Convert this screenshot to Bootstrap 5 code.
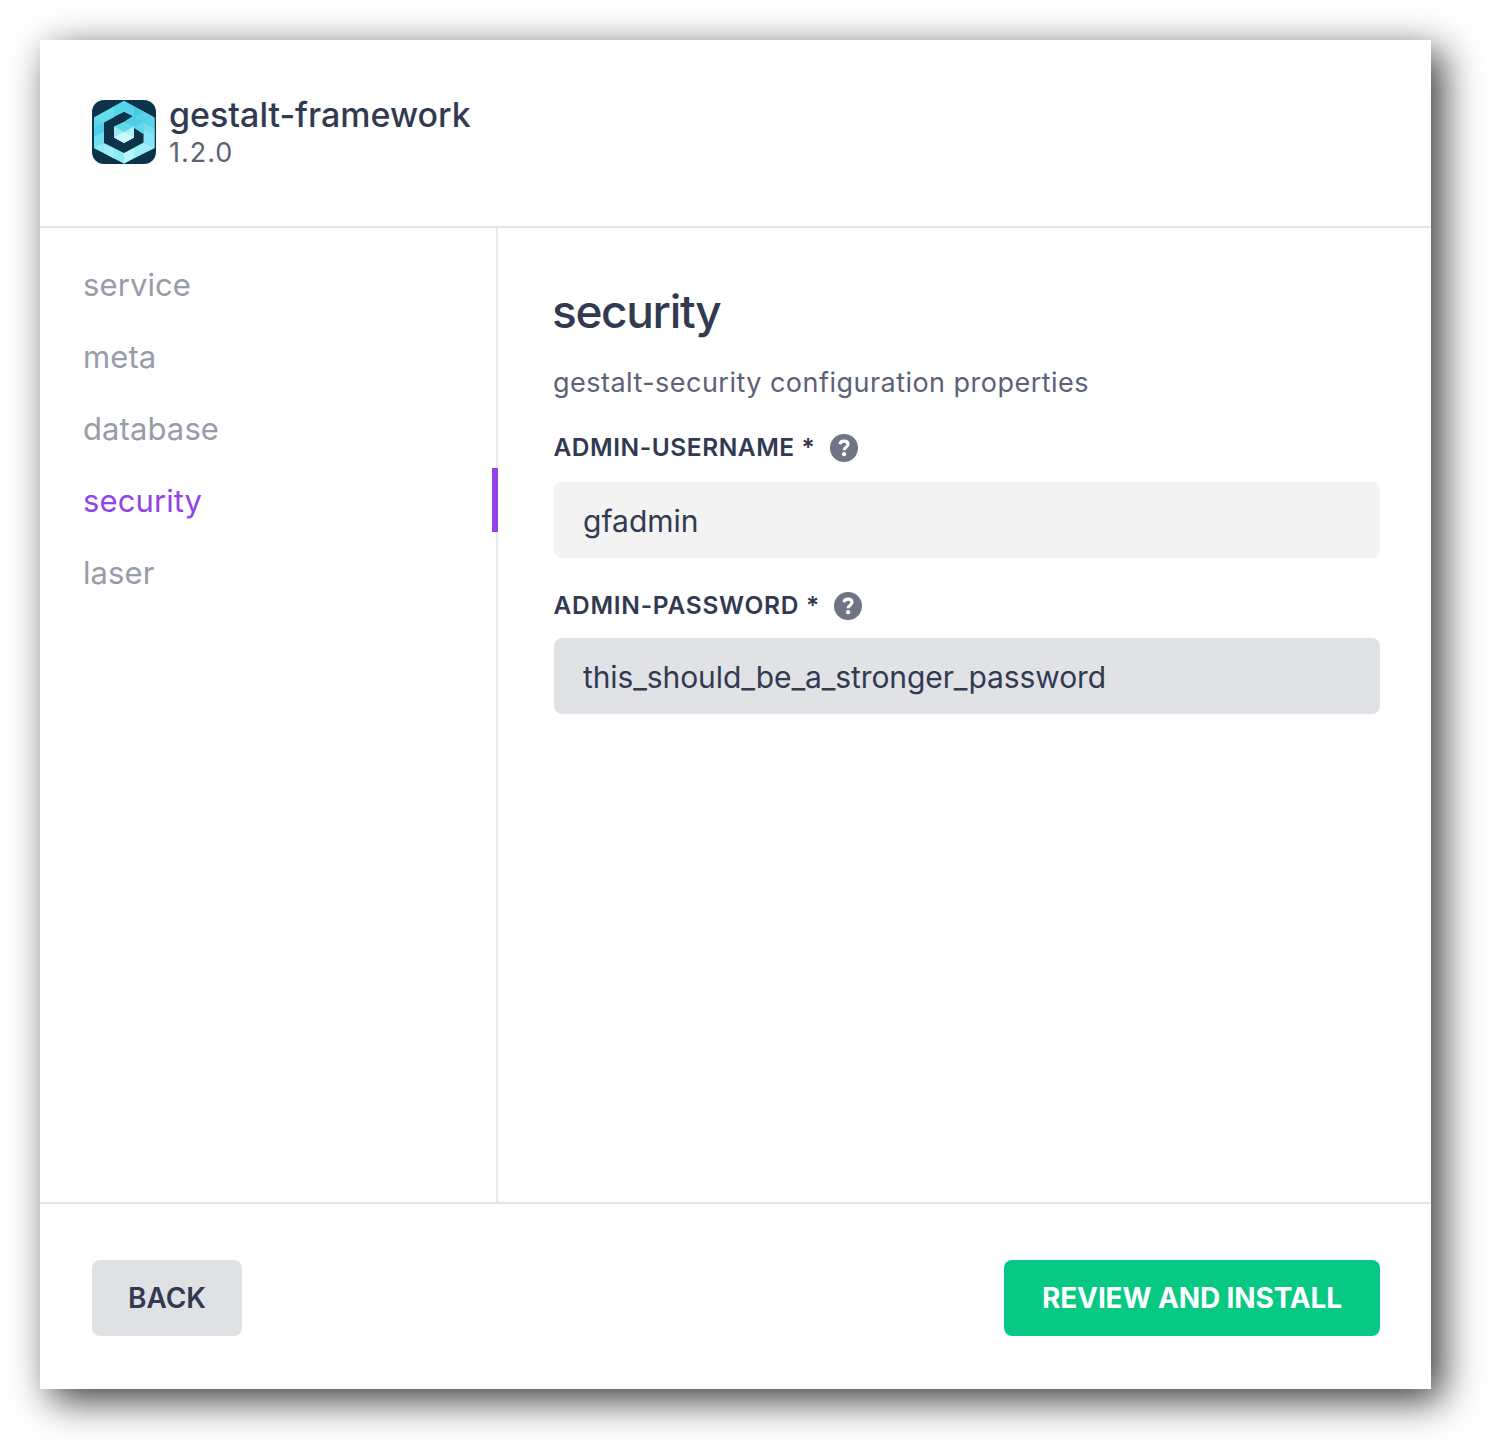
<!DOCTYPE html>
<html lang="en">
<head>
<meta charset="utf-8">
<meta name="viewport" content="width=device-width, initial-scale=1">
<title>gestalt-framework</title>
<link href="https://cdn.jsdelivr.net/npm/bootstrap@5.3.0/dist/css/bootstrap.min.css" rel="stylesheet">
<style>
body{font-family:Inter,"Liberation Sans",sans-serif;color:#323a51;background:#fff;height:1449px;overflow:hidden}
.installer{margin:40px 60px 60px 40px;height:1349px;background:#fff;box-shadow:11px 11px 37px rgba(0,0,0,.78)}
.top-bar{height:188px;border-bottom:2px solid #e4e5e8;padding:55px 52px 0}
.logo{width:64px;height:64px;margin:5px 13px 0 0}
.pkg-name{font-size:34px;line-height:40px;font-weight:500}
.pkg-version{font-size:27px;line-height:36px;color:#5b6276;letter-spacing:1px}
.side{width:458px;border-right:2px solid #e7e8eb;padding-top:24px}
.side .nav-link{height:64px;margin-bottom:8px;padding:0 0 0 43px;font-size:31px;line-height:65px;letter-spacing:.1px;color:#989ca8}
.side .nav-link.active{color:#9144e8;border-right:6px solid #9144e8;margin-right:-2px}
.pane{padding:55px 51px 0 56px}
.pane h1{font-size:46px;line-height:56px;font-weight:500;letter-spacing:-1.35px;margin:0 0 24px -2px}
.descr{font-size:27px;line-height:40px;color:#5b6276;letter-spacing:.47px;margin:0 0 24px -1px}
.form-label{font-size:24.5px;line-height:40px;font-weight:600;letter-spacing:.55px;margin:0 0 0 -.5px;height:55px}
.form-label + .form-control,.form-label + .form-control:focus{height:76px;border:0;border-radius:8px;background:#f3f3f3;color:#323a51;font-size:30px;padding:2px 29px 0;box-shadow:none}
.pw-label{margin-top:27px;height:53px;letter-spacing:.74px}
.form-label + .form-control.hot{background:#e1e2e6;letter-spacing:-.1px}
.help{width:28px;height:28px;margin:7px 0 0 15px}
.pw-label .help{margin-left:13.5px}
.bottom-bar{height:187px;border-top:2px solid #e4e5e8;padding:56px 51px 0 52px}
.bottom-bar .btn{height:76px;border:0;border-radius:8px;font-size:28px;font-weight:600;padding:0}
.bottom-bar .btn-back{width:150px;background:#e0e1e5;color:#323a51}
.bottom-bar .btn-go{width:376px;background:#07c983;color:#fff;font-weight:700;letter-spacing:-.12px}
</style>
<script src="https://cdn.jsdelivr.net/npm/bootstrap@5.3.0/dist/js/bootstrap.bundle.min.js"></script>
</head>
<body>
<svg class="d-none" xmlns="http://www.w3.org/2000/svg">
  <symbol id="help" viewBox="0 0 28 28">
    <circle cx="14" cy="14" r="14" fill="#6f7585"/>
    <path d="M9.900 10.300C10.300 8.200 11.900 7.100 14 7.100c2.400 0 4 1.300 4 3.200 0 2.900-3.900 2.900-3.900 5.900" fill="none" stroke="#fff" stroke-width="3.100"/>
    <circle cx="14.100" cy="20.200" r="2.100" fill="#fff"/>
  </symbol>
</svg>
<main class="installer d-flex flex-column">
  <header class="top-bar d-flex align-items-start flex-shrink-0">
    <svg class="logo" viewBox="0 0 64 64" aria-hidden="true">
      <rect width="64" height="64" rx="12" fill="#0d3349"/>
      <path d="M32 1 62.500 17.500V48L32 63.500 2 48V17.500z" fill="#6fdff0"/>
      <path d="M32 1 2 17.500 12 22.500 32 12z" fill="#63ddf0"/>
      <path d="M32 1 42 6.500 32 12 22 17V6.500z" fill="#56d4ea"/>
      <path d="M2 17.500V37L12 32V22.500z" fill="#5ed7ee"/>
      <path d="M2 27 12 22.500V43L2 37z" fill="#4fd0ea"/>
      <path d="M2 37 12 32V43L2 48z" fill="#70e0f1"/>
      <path d="M2 48 12 43 32 53V63.500z" fill="#8cecf5"/>
      <path d="M12 43 22 48V58.500L12 53z" fill="#9ceff6"/>
      <path d="M32 53V63.500L42 58V48z" fill="#b8f6fa"/>
      <path d="M42 48 51.500 42.500 62.500 48 42 58z" fill="#9ceff7"/>
      <path d="M51.500 29 62.500 35V48L51.500 42.500z" fill="#86e6f2"/>
      <path d="M32 1 62.500 17.500 51.500 23 32 12z" fill="#55d3ea"/>
      <path d="M42 6.500 52 12 42 17z" fill="#48c8e2"/>
      <path d="M62.500 17.500V35L51.500 29V23z" fill="#5cd3e7"/>
      <path d="M51.500 23 62.500 29V35L51.500 29z" fill="#72dded"/>
      <path d="M32 12 40 16 32 22 22 26.500V37.500L32 43 42 37.500V27L51.500 33V42.500L32 53 12 43V22.500z" fill="#0d3349"/>
      <path d="M40 16 51.500 22V34L42 28 32 22.500z" fill="#50cde4"/>
      <path d="M42 27.500 51.500 22V34z" fill="#64d8ea"/>
      <path d="M32 12 40.500 16.300 32 21.500 22 26.500V17z" fill="#0d3349"/>
      <path d="M32 22 42 27 32 32 22 26.500z" fill="#62d7eb"/>
      <path d="M22 26.500 32 32V43L22 37.500z" fill="#98eaf4"/>
      <path d="M42 26.500V37.500L32 43V32z" fill="#b0f1f8"/>
      <path d="M22 37.500 32 32 42 37.500 32 43z" fill="#cdf9fb"/>
    </svg>
    <div>
      <div class="pkg-name">gestalt-framework</div>
      <div class="pkg-version">1.2.0</div>
    </div>
  </header>
  <div class="d-flex flex-grow-1">
    <nav class="side nav flex-column flex-nowrap flex-shrink-0">
      <a class="nav-link" href="#">service</a>
      <a class="nav-link" href="#">meta</a>
      <a class="nav-link" href="#">database</a>
      <a class="nav-link active" aria-current="page" href="#">security</a>
      <a class="nav-link" href="#">laser</a>
    </nav>
    <form class="pane flex-grow-1">
      <h1>security</h1>
      <p class="descr">gestalt-security configuration properties</p>
      <label class="form-label d-flex align-items-start" for="user">ADMIN-USERNAME *<svg class="help"><use href="#help"/></svg></label>
      <input class="form-control" id="user" type="text" value="gfadmin">
      <label class="form-label pw-label d-flex align-items-start" for="pass">ADMIN-PASSWORD *<svg class="help"><use href="#help"/></svg></label>
      <input class="form-control hot" id="pass" type="text" value="this_should_be_a_stronger_password">
    </form>
  </div>
  <footer class="bottom-bar d-flex justify-content-between align-items-start flex-shrink-0">
    <button type="button" class="btn btn-back">BACK</button>
    <button type="button" class="btn btn-go">REVIEW AND INSTALL</button>
  </footer>
</main>
</body>
</html>
